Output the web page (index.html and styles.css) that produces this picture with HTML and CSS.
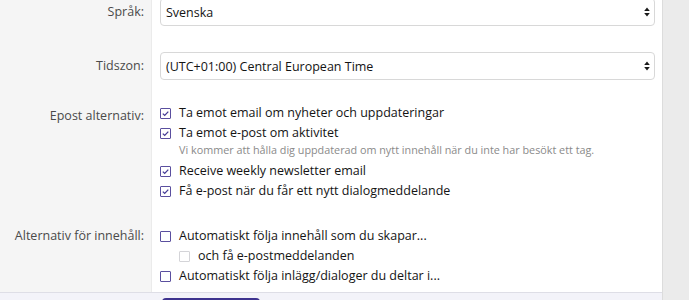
FILE: index.html
```html
<!DOCTYPE html>
<html lang="sv">
<head>
    <meta charset="UTF-8">
    <meta name="viewport" content="width=device-width, initial-scale=1.0">
    <title>Inställningar</title>
    <link rel="stylesheet" href="styles.css">
</head>
<body>
<form class="block" id="prefsForm">
    <div class="block-body">
        <dl class="form-row form-row--input">
            <dt><label for="language">Språk:</label></dt>
            <dd>
                <div class="select-wrap">
                    <select id="language" class="input">
                        <option selected>Svenska</option>
                        <option>English</option>
                    </select>
                    <svg class="select-arrow" width="6" height="10" viewBox="0 0 6 10"><path d="M3 0.5L5.8 4H0.2z M3 9.5L5.8 6H0.2z" fill="#1a1a1a"/></svg>
                </div>
            </dd>
        </dl>

        <dl class="form-row form-row--input">
            <dt><label for="timezone">Tidszon:</label></dt>
            <dd>
                <div class="select-wrap">
                    <select id="timezone" class="input">
                        <option selected>(UTC+01:00) Central European Time</option>
                    </select>
                    <svg class="select-arrow" width="6" height="10" viewBox="0 0 6 10"><path d="M3 0.5L5.8 4H0.2z M3 9.5L5.8 6H0.2z" fill="#1a1a1a"/></svg>
                </div>
            </dd>
        </dl>

        <dl class="form-row">
            <dt><span class="row-label">Epost alternativ:</span></dt>
            <dd>
                <ul class="choices">
                    <li><label class="check checked">Ta emot email om nyheter och uppdateringar</label></li>
                    <li>
                        <label class="check checked">Ta emot e-post om aktivitet</label>
                        <span class="hint">Vi kommer att hålla dig uppdaterad om nytt innehåll när du inte har besökt ett tag.</span>
                    </li>
                    <li><label class="check checked">Receive weekly newsletter email</label></li>
                    <li><label class="check checked">Få e-post när du får ett nytt dialogmeddelande</label></li>
                </ul>
            </dd>
        </dl>

        <dl class="form-row form-row--last">
            <dt><span class="row-label">Alternativ för innehåll:</span></dt>
            <dd>
                <ul class="choices">
                    <li>
                        <label class="check">Automatiskt följa innehåll som du skapar...</label>
                        <ul class="choices choices--sub">
                            <li><label class="check disabled">och få e-postmeddelanden</label></li>
                        </ul>
                    </li>
                    <li><label class="check">Automatiskt följa inlägg/dialoger du deltar i...</label></li>
                </ul>
            </dd>
        </dl>
    </div>
    <div class="form-submit">
        <button type="submit" class="button">Spara</button>
    </div>
</form>
</body>
</html>
```

FILE: styles.css
```css
/* Page */
body {
    margin: 0;
    background: #ebebeb;
    font-family: "Open Sans", "Noto Sans", sans-serif;
    font-size: 12.5px;
    color: #141414;
}
/* Form block */
.block {
    width: 662px;
    margin-top: -15px;
    background: #fff;
    border-right: 1px solid #dcdcdc;
}
.form-row {
    display: grid;
    grid-template-columns: 152px 1fr;
    margin: 0;
}
.form-row dt {
    background: #f5f5f5;
    border-right: 1px solid #ebebeb;
    padding: 13px 7px 0 0;
    text-align: right;
    color: #4a4a4a;
    line-height: 20px;
}
.form-row dd {
    margin: 0;
    padding: 10px 7px 10px 8px;
}
.form-row--input dt {
    padding-top: 17px;
}
.form-row--input dd {
    padding-top: 13px;
    padding-bottom: 13px;
}
.form-row--last dt {
    padding-top: 15px;
}
.form-row--last dd {
    padding-top: 15px;
    padding-bottom: 6px;
}
/* Select */
.select-wrap {
    position: relative;
}
.input {
    display: block;
    width: 100%;
    height: 28px;
    padding: 0 20px 0 5px;
    border: 1px solid #d8d8d8;
    border-radius: 4px;
    background: #fff;
    font: inherit;
    color: #141414;
    appearance: none;
    -webkit-appearance: none;
}
.select-arrow {
    position: absolute;
    right: 5px;
    top: 9px;
}
/* Checkboxes */
.choices {
    list-style: none;
    margin: 0;
    padding: 0;
}
.choices li {
    line-height: 20px;
}
.choices--sub {
    padding-left: 19px;
}
.check {
    display: flex;
    align-items: center;
    gap: 8px;
    height: 20px;
}
.check::before {
    content: "";
    flex: none;
    width: 9px;
    height: 9px;
    border: 1px solid #5a4f9f;
    border-radius: 1px;
    background: #fff;
}
.check.checked::before {
    background: #fff url("data:image/svg+xml,%3Csvg xmlns='http://www.w3.org/2000/svg' viewBox='0 0 9 9'%3E%3Cpath d='M1.8 4.6L3.7 6.4L7.3 2.6' fill='none' stroke='%23463c96' stroke-width='1.3'/%3E%3C/svg%3E") center / 9px 9px no-repeat;
}
.check.disabled::before {
    border-color: #d4d4d8;
}
.hint {
    display: block;
    padding-left: 19px;
    font-size: 10.8px;
    line-height: 14px;
    color: #8a8a8a;
    padding-bottom: 4px;
}
/* Submit row */
.form-submit {
    border-top: 1px solid #dedee6;
    background: #f3f3f9;
    padding: 5px 0 0 162px;
}
.button {
    width: 98px;
    height: 30px;
    border: 0;
    border-radius: 4px;
    background: #3e338f;
    color: #fff;
    font: inherit;
}
```
